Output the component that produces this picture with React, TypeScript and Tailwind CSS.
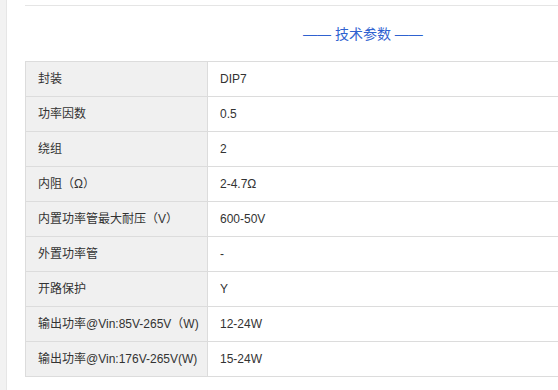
const rows: [string, string][] = [
  ["封装", "DIP7"],
  ["功率因数", "0.5"],
  ["绕组", "2"],
  ["内阻（Ω）", "2-4.7Ω"],
  ["内置功率管最大耐压（V）", "600-50V"],
  ["外置功率管", "-"],
  ["开路保护", "Y"],
  ["输出功率@Vin:85V-265V（W)", "12-24W"],
  ["输出功率@Vin:176V-265V(W)", "15-24W"],
];

export default function App() {
  return (
    <div
      className="flex h-[390px] w-[558px] overflow-hidden bg-white text-[12px] text-[#333]"
      style={{ fontFamily: '"Liberation Sans", "Noto Sans CJK SC", sans-serif' }}
    >
      {/* left gutter */}
      <div className="w-[7px] shrink-0 border-r border-[#e6e6e6] bg-[#f2f2f2]" />

      <div className="flex-1 pl-[18px] pt-[5px]">
        <div className="border-t border-[#e5e5e5]" />

        <div className="flex h-[55px] items-center pl-[278px] text-[14px] text-[#2f62d0]">
          <span className="mt-[1px]">—— 技术参数 ——</span>
        </div>

        <table className="w-[540px] border-collapse">
          <tbody>
            {rows.map(([k, v]) => (
              <tr key={k} className="h-[35px]">
                <td className="w-[182px] border border-[#dcdcdc] bg-[#f0f0f0] pl-[12px] align-middle">
                  {k}
                </td>
                <td className="border border-[#dcdcdc] pl-[12px] align-middle">{v}</td>
              </tr>
            ))}
          </tbody>
        </table>
      </div>
    </div>
  );
}
